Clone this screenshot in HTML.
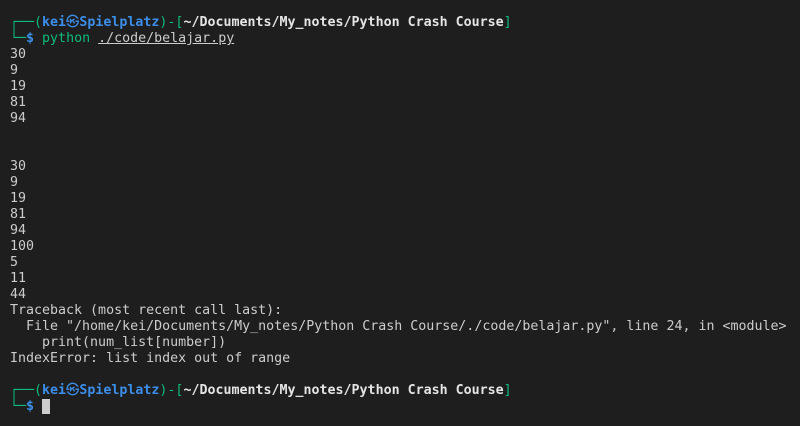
<!DOCTYPE html>
<html><head><meta charset="utf-8"><style>
html,body{margin:0;padding:0;background:#1e1e1e;width:800px;height:426px;overflow:hidden}
pre{margin:0;position:absolute;left:10px;top:15px;font-family:"DejaVu Sans Mono","Liberation Mono","Noto Sans CJK JP",monospace;font-size:13.3px;line-height:16px;color:#cccccc}
.g{color:#0dbc79}
.b{color:#3b8eea;font-weight:bold}
.w{color:#e5e5e5;font-weight:bold}
.u{text-decoration:underline}
.c{background:#cccccc}
</style></head><body><pre><span class="g">┌──(</span><span class="b">kei㉿Spielplatz</span><span class="g">)-[</span><span class="w">~/Documents/My_notes/Python Crash Course</span><span class="g">]</span>
<span class="g">└─</span><span class="b">$</span> <span class="g">python</span> <span class="u">./code/belajar.py</span>
30
9
19
81
94


30
9
19
81
94
100
5
11
44
Traceback (most recent call last):
  File "/home/kei/Documents/My_notes/Python Crash Course/./code/belajar.py", line 24, in &lt;module&gt;
    print(num_list[number])
IndexError: list index out of range

<span class="g">┌──(</span><span class="b">kei㉿Spielplatz</span><span class="g">)-[</span><span class="w">~/Documents/My_notes/Python Crash Course</span><span class="g">]</span>
<span class="g">└─</span><span class="b">$</span> <span class="c"> </span></pre></body></html>
